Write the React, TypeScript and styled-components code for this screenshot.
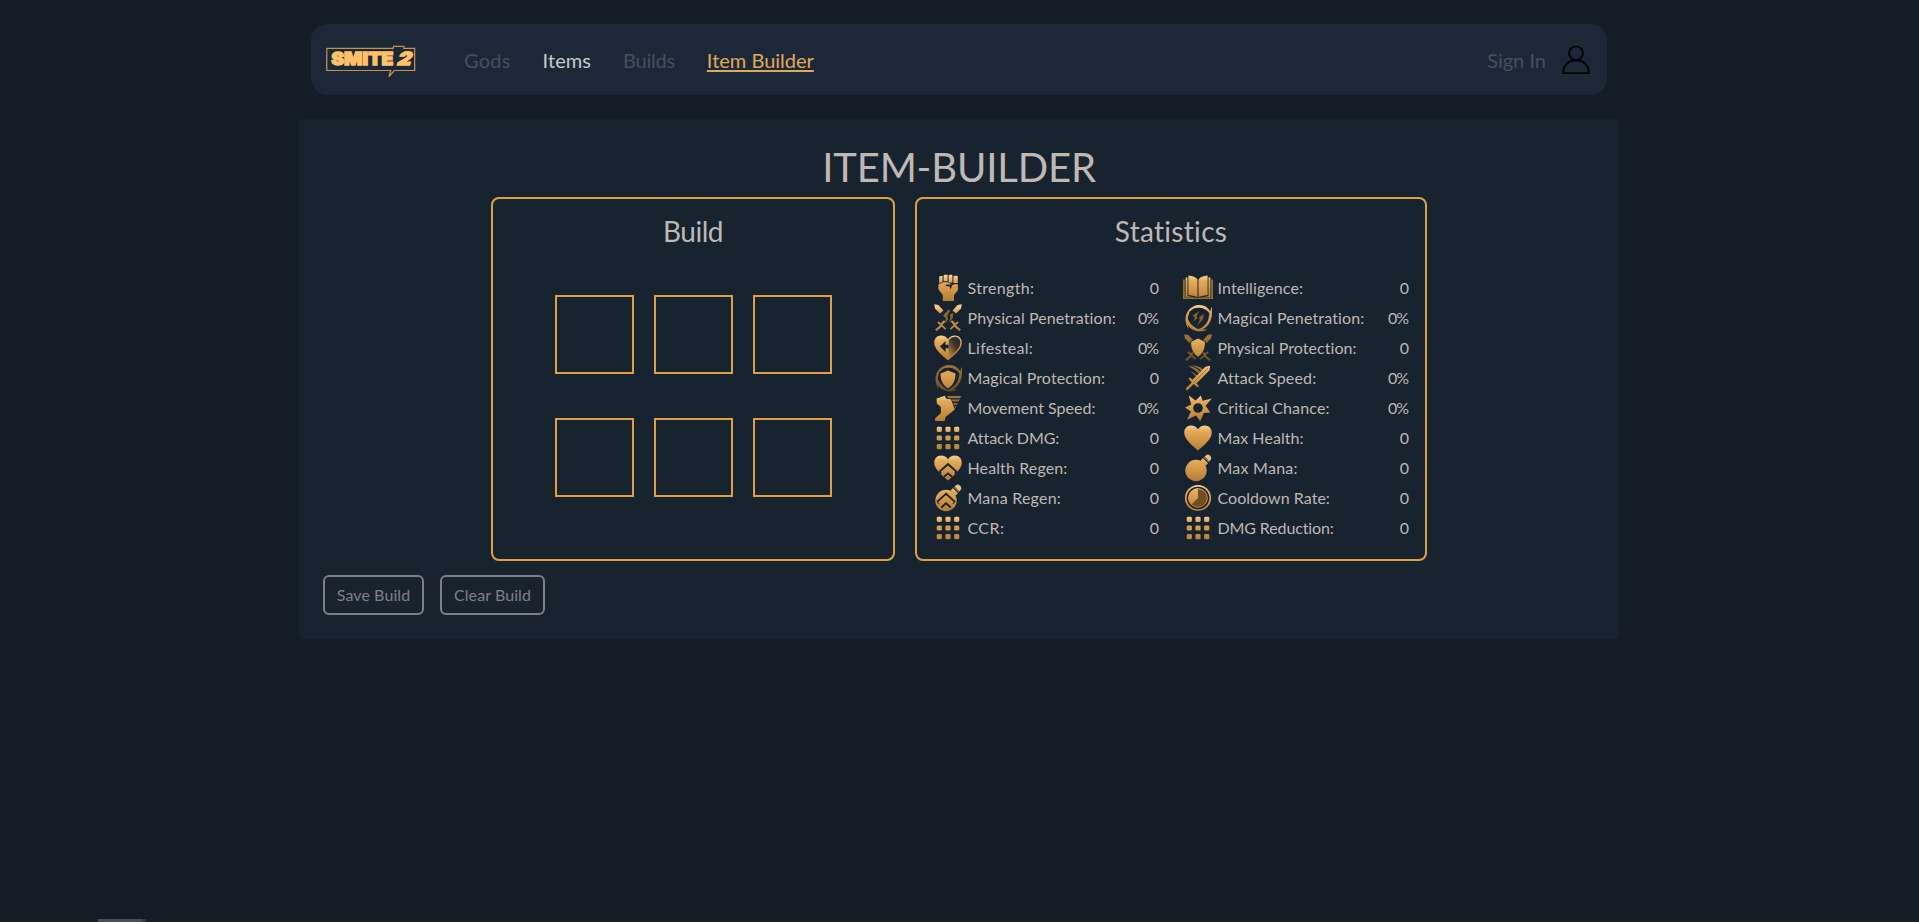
import React from "react";
import styled, { createGlobalStyle } from "styled-components";

const colors = {
  page: "#131d28",
  nav: "#1c2838",
  panel: "#182330",
  gold: "#dfa044",
  text: "#bfb8b4",
  muted: "#474f5b",
  disabled: "#808083",
};

const GlobalStyle = createGlobalStyle`
  * { box-sizing: border-box; }
  body {
    margin: 0;
    background: ${colors.page};
    color: ${colors.text};
    font-family: Lato, "Open Sans", sans-serif;
    font-variant-ligatures: none;
    overflow: hidden;
  }
`;

const Page = styled.div`
  display: flex;
  flex-direction: column;
  height: 922px;
`;

const Content = styled.div`
  display: flex;
  flex-direction: column;
  align-items: center;
  width: 1918px;
  padding-top: 24px;
`;

const NavBar = styled.nav`
  display: flex;
  align-items: center;
  width: 1296px;
  height: 71px;
  padding: 0 16px 0 14px;
  border-radius: 16px;
  background: ${colors.nav};
`;

const Logo = styled.svg`
  display: block;
  width: 91px;
  height: 34px;
  margin-top: 4px;
`;

const NavLinks = styled.div`
  display: flex;
  gap: 32px;
  margin-left: 48px;
`;

const NavLink = styled.a<{ $tone: "muted" | "plain" | "active"; $track?: number }>`
  font-size: 20px;
  line-height: 26px;
  letter-spacing: ${(p) => p.$track ?? 0}px;
  color: ${(p) => (p.$tone === "muted" ? colors.muted : p.$tone === "active" ? "#e0a85a" : "#c5c8ce")};
  text-decoration: ${(p) => (p.$tone === "active" ? "underline" : "none")};
  text-decoration-skip-ink: none;
  text-decoration-thickness: 2px;
  text-underline-offset: 2px;
`;

const Account = styled.div`
  display: flex;
  align-items: center;
  gap: 15px;
  margin-left: auto;
`;

const UserIcon = styled.svg`
  display: block;
  width: 30px;
  height: 30px;
`;

const Panel = styled.main`
  width: 1320px;
  height: 520px;
  margin-top: 24px;
  padding: 24px;
  border-radius: 5px;
  background: ${colors.panel};
`;

const Title = styled.h1`
  margin: 0;
  font-size: 40px;
  font-weight: 400;
  line-height: 48px;
  letter-spacing: -0.16px;
  text-align: center;
`;

const Boxes = styled.div`
  display: flex;
  justify-content: center;
  gap: 20px;
  margin-top: 6px;
`;

const Box = styled.section<{ $width: number }>`
  display: flex;
  flex-direction: column;
  align-items: center;
  width: ${(p) => p.$width}px;
  height: 364px;
  padding: 16px 16px 0;
  border: 2px solid ${colors.gold};
  border-radius: 8px;
`;

const BoxTitle = styled.h2<{ $track: number }>`
  margin: 0;
  font-size: 28px;
  font-weight: 400;
  line-height: 33px;
  letter-spacing: ${(p) => p.$track}px;
`;

const Slots = styled.div`
  display: grid;
  grid-template-columns: repeat(3, 79px);
  grid-auto-rows: 79px;
  gap: 44px 20px;
  margin: 47px 0 0 1px;
`;

const Slot = styled.div`
  border: 2px solid ${colors.gold};
`;

const StatGrid = styled.div`
  display: grid;
  grid-template-columns: repeat(2, 226px);
  grid-auto-rows: 30px;
  column-gap: 24px;
  margin-top: 25px;
`;

const StatRow = styled.div`
  display: flex;
  align-items: center;
  gap: 4.5px;
  font-size: 16px;
  line-height: 20px;
`;

const StatIcon = styled.svg`
  display: block;
  flex: none;
  width: 30px;
  height: 30px;
`;

const StatLabel = styled.span<{ $track: number }>`
  letter-spacing: ${(p) => p.$track}px;
  white-space: nowrap;
`;

const StatValue = styled.span<{ $percent: boolean }>`
  margin-left: auto;
  letter-spacing: ${(p) => (p.$percent ? -1 : 0)}px;
  margin-right: ${(p) => (p.$percent ? 1 : 0)}px;
`;

const Actions = styled.div`
  display: flex;
  gap: 16px;
  margin-top: 14px;
`;

const ActionButton = styled.button<{ $width: number }>`
  width: ${(p) => p.$width}px;
  height: 40px;
  padding: 0;
  border: 2px solid ${colors.disabled};
  border-radius: 6px;
  background: transparent;
  color: ${colors.disabled};
  font: 400 16px/20px Lato, sans-serif;
  letter-spacing: 0.08px;
`;

const ScrollTrack = styled.div`
  display: flex;
  width: 100%;
  height: 3px;
  margin-top: auto;
  padding-left: 98px;
  background: #1d1e1f;
`;

const ScrollThumb = styled.div`
  width: 48px;
  height: 3px;
  background: #4d4d4d;
  border-right: 4px solid #3a3a3a;
`;

const Defs = styled.svg`
  position: absolute;
  width: 0;
  height: 0;
`;

const HEART = "M15 27.6C12 24.5 1.2 17.5 1.2 9.6C1.2 5.2 4.4 2.4 8 2.4C11 2.4 13.7 4 15 6.2C16.3 4 19 2.4 22 2.4C25.6 2.4 28.8 5.2 28.8 9.6C28.8 17.5 18 24.5 15 27.6Z";
const SHIELD = "M15 7.6L22.4 10.6C22.6 17 20.6 22 15 25.4C9.4 22 7.4 17 7.6 10.6Z";
const G = "url(#gold)";
const D = "url(#dim)";
const BG = colors.panel;

const Dots = () => (
  <>
    {[3.7, 12.4, 21.1].flatMap((y) =>
      [3.7, 12.4, 21.1].map((x) => <rect key={`${x}-${y}`} x={x} y={y} width="5.2" height="5.2" rx="1.4" fill={G} />)
    )}
  </>
);

const Swirl = ({ fill }: { fill: string }) => (
  <g fill={fill}>
    <path d="M6 7.6C10 1.6 19 0 25 5.4C27.6 7.8 28.8 11 28.6 14.6C26.6 9 22 4.8 16 4.8C12 4.8 8.6 5.6 6 7.6Z" />
    <path d="M28.8 3.8C29.4 11 29 19.6 22.6 24.6C19.6 26.8 16 27.6 12.6 27C19 25.6 24.6 21 25.6 15C26.4 11 27.4 7 28.8 3.8Z" />
    <path d="M24.6 26.4C17 30 8.4 28.4 4.6 21.8C3 18.6 2.6 15.2 3.4 12C5 18 9 24 15 25.4C18.6 26.4 21.6 26.8 24.6 26.4Z" />
    <path d="M5.8 26.2C1.6 20.6 1 11.6 6.6 6C9.4 3.4 12.6 2.2 16 2.4C10 4.4 5.2 9.4 4.8 15.4C4.6 19.4 4.8 23 5.8 26.2Z" />
  </g>
);

const Swords = ({ fill }: { fill: string }) => (
  <g fill={fill}>
    <path d="M1.2 1.2L5.4 2L10.4 7.4L7 10.6L2 5.4Z" />
    <path d="M28.8 1.2L24.6 2L19.6 7.4L23 10.6L28 5.4Z" />
    <path d="M5.6 18.2L13.2 25.6L12 26.8L8.8 23.8L3.6 28L2 26.6L7.2 22.2L4.4 19.4Z" />
    <path d="M24.4 18.2L16.8 25.6L18 26.8L21.2 23.8L26.4 28L28 26.6L22.8 22.2L25.6 19.4Z" />
    <path d="M10.8 17.2L12.4 18.6L9 22.2L7.6 20.6Z" />
    <path d="M19.2 17.2L17.6 18.6L21 22.2L22.4 20.6Z" />
  </g>
);

const Flask = () => (
  <>
    <circle cx="13" cy="17.5" r="10.7" fill={G} />
    <path d="M17.6 7.6L21 4L26.2 9L22.6 12.8Z" fill={G} />
    <path d="M20.3 4.6L25.8 10.2" stroke={BG} strokeWidth="1.1" fill="none" />
    <path d="M21.6 3.6L24 1.6C26.8 1.6 28.4 3.4 28.2 6L26.4 8.6Z" fill="#ecc07e" />
  </>
);

const icons: Record<string, React.ReactNode> = {
  fist: (
    <g fill={G}>
      <path d="M6.2 4.2Q6.2 3 7.6 3H9.6V8.6L6.2 10.4Z" />
      <path d="M10.6 3Q10.6 1.8 12 1.8H14.6V8.2H10.6Z" />
      <path d="M15.6 3Q15.6 1.8 17 1.8H19.4V9.6H15.6Z" />
      <path d="M20.4 4Q20.4 2.8 22 2.8H23.4Q24.8 2.8 24.8 4.2V10H20.4Z" />
      <path d="M5.4 11.4L10 9.3H14.8Q17.6 10.6 18.6 11.6H13.6L12 12.8L16.6 13.4L17.6 16.4L19 12.6L21 11.2H24.9V17.2L21 22V28H9.8V22L5.4 16.6Z" />
    </g>
  ),
  physicalPenetration: (
    <>
      <Swords fill={G} />
      <path d="M15.6 6.4L17 7.6L14.4 12.4L15 16.6L11.6 21.4L12.8 15.6L10 12.6Z" fill={D} />
      <path d="M20.4 10L19.6 15.4L15.6 19.6L17.6 14.4L16.6 11.6Z" fill={D} />
    </>
  ),
  lifesteal: (
    <>
      <path d={HEART} fill={G} />
      <path d="M15.6 7.6C17.6 4.6 20.2 3.8 22 3.8C25 3.8 27.4 6.2 27.4 9.8C27.4 15.6 20 22 15.6 25.2Z" fill="url(#shade)" />
      <path d="M7 13.4L12.6 8V11.8H15.6V15.2H12.6V19Z" fill={BG} />
    </>
  ),
  magicalProtection: (
    <>
      <Swirl fill={D} />
      <path d="M15 5.4L24 9C24.2 17 21.8 23 15 27.2C8.2 23 5.8 17 6 9Z" fill={BG} />
      <path d={SHIELD} fill={G} />
    </>
  ),
  boot: (
    <>
      <path d="M3.6 5.4L11.8 2.8L13 5.4L18 6.4L21.8 16.4L12.6 24L11.6 28H2.2L2 25.4L8 20L7.8 14L3.8 10.6Z" fill={G} />
      <g fill={D}>
        <path d="M13.8 3H28.4L27 5.2H16Z" />
        <path d="M18.4 6.6H27L25.4 8.6H19.4Z" />
        <path d="M20 10H25L23.6 12H20.8Z" />
        <path d="M21.4 13.2H24L22.4 15.2Z" />
      </g>
    </>
  ),
  dots: <Dots />,
  healthRegen: (
    <>
      <path d={HEART} fill={G} />
      <path d="M15 9.8L24.6 18.4L22.4 21.2L15 14.6L7.6 21.2L5.4 18.4Z" fill={BG} />
      <path d="M15 12.4L22.2 18.8L20.4 21L15 16.4L9.6 21L7.8 18.8Z" fill={G} />
      <path d="M15 19.2L19.6 23L18.4 24.4L15 21.4L11.6 24.4L10.4 23Z" fill={BG} />
    </>
  ),
  manaRegen: (
    <>
      <Flask />
      <path d="M13 9.6L22.6 18.2L20.4 21.4L13 14.8L5.6 21.4L3.4 18.2Z" fill={BG} />
      <path d="M13 12L21 19.2L18.8 21.6L13 16.4L7.2 21.6L5 19.2Z" fill={G} />
      <path d="M13 19L18.4 23.8L17 25.2L13 21.6L9 25.2L7.6 23.8Z" fill={BG} />
    </>
  ),
  book: (
    <g fill={G}>
      <path d="M5.4 2.6Q12 3 14.5 6.4V24Q10 22.4 5.4 22Z" />
      <path d="M24.6 2.6Q18 3 15.5 6.4V24Q20 22.4 24.6 22Z" />
      <path d="M2.6 4.4H4.5V23.2L13 24.4H2.6Z" />
      <path d="M27.4 4.4H25.5V23.2L17 24.4H27.4Z" />
      <path d="M0 6.4H1.8V24.8H28.2V6.4H30V26H0Z" fill="#9a6b2e" />
    </g>
  ),
  magicalPenetration: (
    <>
      <Swirl fill={G} />
      <path d="M15 5.4L23.6 8.6C23.8 16.6 21.4 22.2 15 26C8.6 22.2 6.2 16.6 6.4 8.6Z" fill={BG} />
      <path d="M16.4 8.2L13.8 12.2L14.4 15L10.4 18.8L12 14.6L9.6 12.4Z" fill={D} />
      <path d="M20.8 11L20 16L14.4 22.4L16.8 16.6L16 14.6Z" fill={D} />
    </>
  ),
  physicalProtection: (
    <>
      <Swords fill={D} />
      <path d="M15 5L22.4 8.6C22.6 15.4 20.6 20.2 15 24.4C9.4 20.2 7.4 15.4 7.6 8.6Z" fill={G} stroke={BG} strokeWidth="1" />
    </>
  ),
  sword: (
    <>
      <path d="M5 3Q13 3.4 18 9.4L16.2 11Q11 5.4 5 3Z" fill={D} />
      <path d="M8.6 2.6Q16 2.6 20.4 6.8L18.8 8.4Q14.6 4 8.6 2.6Z" fill={D} />
      <path d="M7 8.4Q11 9 14 12.6L12.8 13.8Q10.6 10.4 7 8.4Z" fill={D} />
      <path d="M27.2 2.8L26.4 7.6L13.4 20.6L16 23L14.6 24.2L10.6 21L5 26.8L3 27.2L3.2 25L8.8 19.4L5.6 15.6L7 14.4L9.4 16.8L22.4 3.8Z" fill={G} />
      <path d="M25 5L11 19" stroke="#9b6c2c" strokeWidth="0.8" />
    </>
  ),
  star: (
    <path
      fillRule="evenodd"
      fill={G}
      d="M5.8 2.6L12.6 7.4L17.8 2.4L19.6 7.8L28.8 5.6L22.6 12.8L27.4 19.6L20.8 20L17.2 28.2L13 22.4L4 26.8L8 18.4L2 14.6L8.2 11.4ZM15 10.2A4.8 4.8 0 1 0 15 19.8A4.8 4.8 0 1 0 15 10.2Z"
    />
  ),
  heart: <path d={HEART} fill={G} />,
  flask: <Flask />,
  cooldown: (
    <>
      <circle cx="15" cy="15" r="12.2" fill="none" stroke={G} strokeWidth="1.8" />
      <circle cx="15" cy="15" r="9.6" fill="#6f4f22" />
      <path d="M15 15V5.4A9.6 9.6 0 0 0 8.2 21.8Z" fill={G} />
      <circle cx="15" cy="15" r="9.3" fill="none" stroke={G} strokeWidth="0.9" />
    </>
  ),
};

type Stat = { icon: string; label: string; value: string; track: number };

const stats: Stat[] = [
  { icon: "fist", label: "Strength:", value: "0", track: 0.33 },
  { icon: "book", label: "Intelligence:", value: "0", track: 0.1 },
  { icon: "physicalPenetration", label: "Physical Penetration:", value: "0%", track: 0.09 },
  { icon: "magicalPenetration", label: "Magical Penetration:", value: "0%", track: 0.15 },
  { icon: "lifesteal", label: "Lifesteal:", value: "0%", track: 0.3 },
  { icon: "physicalProtection", label: "Physical Protection:", value: "0", track: 0.06 },
  { icon: "magicalProtection", label: "Magical Protection:", value: "0", track: 0.12 },
  { icon: "sword", label: "Attack Speed:", value: "0%", track: 0.14 },
  { icon: "boot", label: "Movement Speed:", value: "0%", track: 0.04 },
  { icon: "star", label: "Critical Chance:", value: "0%", track: 0.15 },
  { icon: "dots", label: "Attack DMG:", value: "0", track: -0.05 },
  { icon: "heart", label: "Max Health:", value: "0", track: 0.06 },
  { icon: "healthRegen", label: "Health Regen:", value: "0", track: 0.12 },
  { icon: "flask", label: "Max Mana:", value: "0", track: 0.24 },
  { icon: "manaRegen", label: "Mana Regen:", value: "0", track: 0.23 },
  { icon: "cooldown", label: "Cooldown Rate:", value: "0", track: 0.04 },
  { icon: "dots", label: "CCR:", value: "0", track: 0.4 },
  { icon: "dots", label: "DMG Reduction:", value: "0", track: -0.12 },
];

const GradientDefs = () => (
  <Defs>
    <defs>
      <linearGradient id="gold" gradientUnits="userSpaceOnUse" x1="0" y1="1" x2="0" y2="29">
        <stop offset="0" stopColor="#ffdca6" />
        <stop offset="0.25" stopColor="#e3ab5c" />
        <stop offset="0.6" stopColor="#cf9546" />
        <stop offset="1" stopColor="#b07a35" />
      </linearGradient>
      <linearGradient id="dim" gradientUnits="userSpaceOnUse" x1="0" y1="1" x2="0" y2="29">
        <stop offset="0" stopColor="#a17638" />
        <stop offset="1" stopColor="#6a4c24" />
      </linearGradient>
      <linearGradient id="shade" x1="0.9" y1="0" x2="0.1" y2="1">
        <stop offset="0" stopColor="#25282b" />
        <stop offset="0.4" stopColor="#3d3527" />
        <stop offset="1" stopColor="#c08a40" />
      </linearGradient>
    </defs>
  </Defs>
);

export default function App() {
  return (
    <>
      <GlobalStyle />
      <GradientDefs />
      <Page>
        <Content>
          <NavBar>
            <Logo viewBox="0 0 88 34" preserveAspectRatio="none">
              <path
                d="M65.6 3.3H1.7V25.5H63.6L61.8 31.6L67 25.5H86.7V3.3H76.2V1.3H66.4L65.4 4.2"
                fill="none"
                stroke="#c29453"
                strokeWidth="1.2"
              />
              <g fill="#ffc168" stroke="#ffc168" strokeWidth="1.3" fontFamily="Inter, sans-serif" fontWeight="900" fontSize="18">
                <text x="6" y="20.4" textLength="60" lengthAdjust="spacingAndGlyphs">SMITE</text>
                <text x="75.5" y="20.4" textLength="13.4" lengthAdjust="spacingAndGlyphs" transform="skewX(-18)">2</text>
              </g>
            </Logo>
            <NavLinks>
              <NavLink $tone="muted" $track={0.2}>Gods</NavLink>
              <NavLink $tone="plain" $track={0.1}>Items</NavLink>
              <NavLink $tone="muted" $track={-0.25}>Builds</NavLink>
              <NavLink $tone="active">Item Builder</NavLink>
            </NavLinks>
            <Account>
              <NavLink $tone="muted">Sign In</NavLink>
              <UserIcon viewBox="0 0 30 30" fill="none" stroke="#000" strokeWidth="1.9">
                <circle cx="15" cy="8.3" r="6.9" />
                <path d="M2 28.1C2 20.6 7.6 15.3 15 15.3S28 20.6 28 28.1Z" />
              </UserIcon>
            </Account>
          </NavBar>
          <Panel>
            <Title>ITEM-BUILDER</Title>
            <Boxes>
              <Box $width={404}>
                <BoxTitle $track={-0.5}>Build</BoxTitle>
                <Slots>
                  {Array.from({ length: 6 }, (_, i) => (
                    <Slot key={i} />
                  ))}
                </Slots>
              </Box>
              <Box $width={512}>
                <BoxTitle $track={0.3}>Statistics</BoxTitle>
                <StatGrid>
                  {stats.map((s) => (
                    <StatRow key={s.label}>
                      <StatIcon viewBox="0 0 30 30">{icons[s.icon]}</StatIcon>
                      <StatLabel $track={s.track}>{s.label}</StatLabel>
                      <StatValue $percent={s.value.endsWith("%")}>{s.value}</StatValue>
                    </StatRow>
                  ))}
                </StatGrid>
              </Box>
            </Boxes>
            <Actions>
              <ActionButton $width={101}>Save Build</ActionButton>
              <ActionButton $width={105}>Clear Build</ActionButton>
            </Actions>
          </Panel>
        </Content>
        <ScrollTrack>
          <ScrollThumb />
        </ScrollTrack>
      </Page>
    </>
  );
}
